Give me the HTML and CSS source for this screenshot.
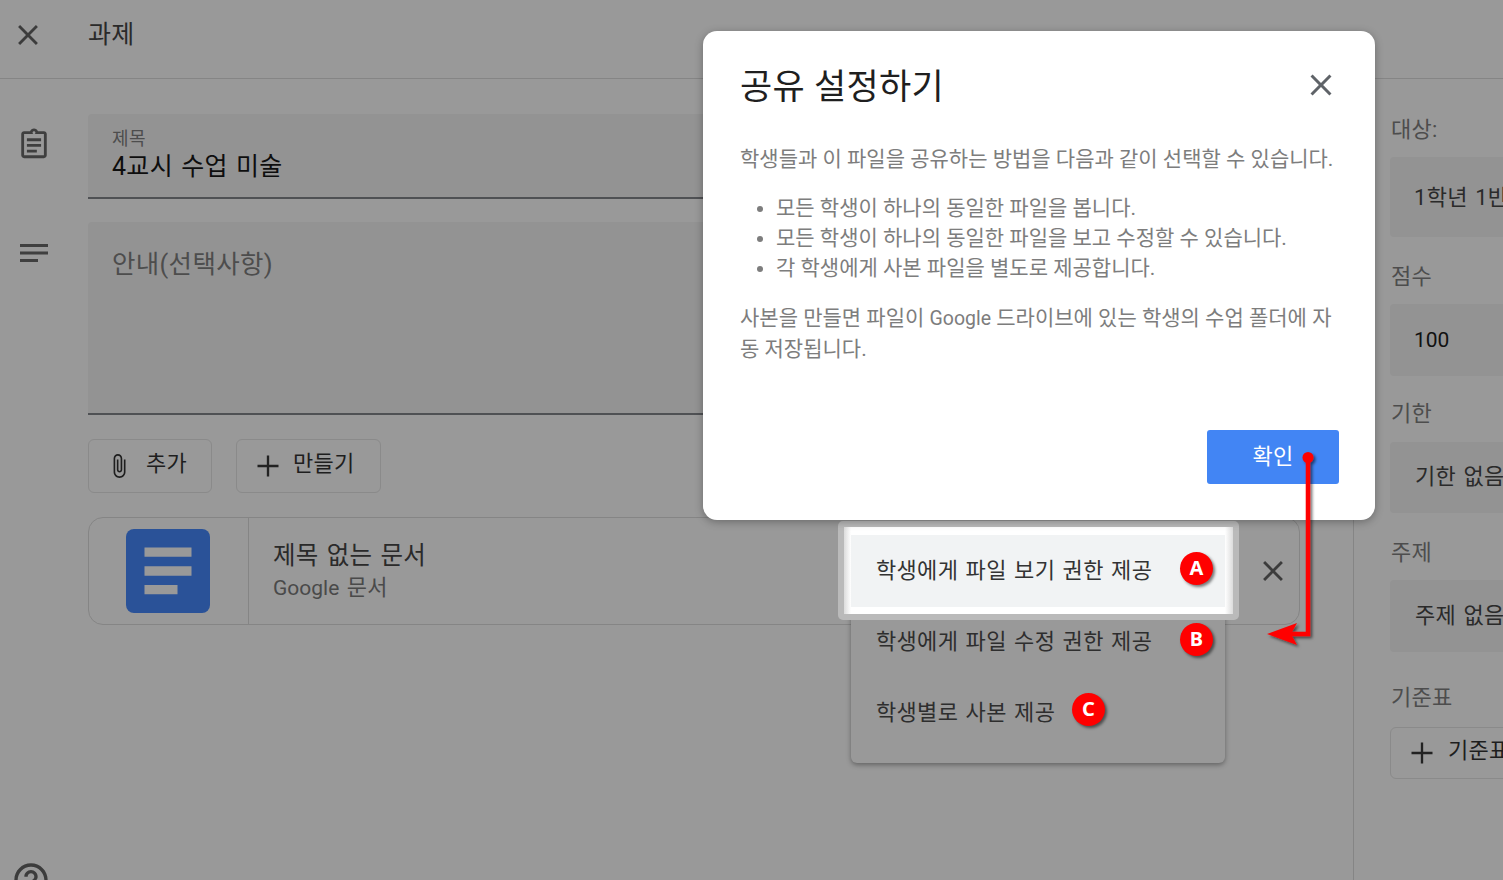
FILE: index.html
```html
<!DOCTYPE html>
<html lang="ko">
<head>
<meta charset="utf-8">
<title>과제</title>
<link rel="stylesheet" href="styles.css">
</head>
<body>
<div class="page">
  <header class="topbar">
    <svg class="close-top" viewBox="0 0 24 24"><path d="M19 6.410 17.590 5 12 10.590 6.410 5 5 6.410 10.590 12 5 17.590 6.410 19 12 13.410 17.590 19 19 17.590 13.410 12z"/></svg>
    <h1 class="page-title">과제</h1>
  </header>
  <div class="body">
    <main class="main">
      <div class="row">
        <svg class="row-icon" viewBox="0 0 24 24"><path d="M19 3h-4.180C14.400 1.840 13.300 1 12 1s-2.400.84-2.820 2H5c-1.100 0-2 .9-2 2v15c0 1.100.9 2 2 2h14c1.100 0 2-.9 2-2V5c0-1.100-.9-2-2-2zm-7 0c.55 0 1 .45 1 1s-.45 1-1 1-1-.45-1-1 .45-1 1-1zm7 17H5V5h14v15zM7 8h10v2H7zm0 4h10v2H7zm0 4h7v2H7z"/></svg>
        <div class="field title-field">
          <div class="field-label">제목</div>
          <div class="field-value">4교시 수업 미술</div>
        </div>
      </div>
      <div class="row">
        <svg class="row-icon" viewBox="0 0 34 34"><path d="M3 9h28v3H3zM3 16.500h28v3H3zM3 24h18v3H3z"/></svg>
        <div class="field desc-field">안내(선택사항)</div>
      </div>
      <div class="actions">
        <button class="btn btn-add">
          <svg class="clip" viewBox="0 0 24 24"><path d="M16.500 6v11.500c0 2.210-1.790 4-4 4s-4-1.790-4-4V5c0-1.380 1.120-2.500 2.500-2.500s2.500 1.120 2.500 2.500v10.500c0 .55-.45 1-1 1s-1-.45-1-1V6H10v9.500c0 1.380 1.120 2.500 2.500 2.500s2.500-1.120 2.500-2.500V5c0-2.210-1.790-4-4-4S7 2.790 7 5v12.500c0 3.040 2.460 5.500 5.500 5.500s5.500-2.460 5.500-5.500V6h-1.500z"/></svg>
          <span>추가</span>
        </button>
        <button class="btn btn-make">
          <svg class="plus" viewBox="0 0 24 24"><path d="M21 13h-8v8h-2v-8H3v-2h8V3h2v8h8z"/></svg>
          <span>만들기</span>
        </button>
      </div>
      <div class="attachment">
        <div class="thumb">
          <svg class="doc-icon" viewBox="0 0 84 84"><rect width="84" height="84" rx="8" fill="#2a5298"/><path fill="#999" d="M18.500 18.500h47v9.200h-47zM18.500 37.200h47v9.500h-47zM18.500 56h33v9.200h-33z"/></svg>
        </div>
        <div class="attach-text">
          <div class="attach-name">제목 없는 문서</div>
          <div class="attach-type"><span class="latin">Google</span> 문서</div>
        </div>
        <svg class="attach-x" viewBox="0 0 24 24"><path d="M19 6.410 17.590 5 12 10.590 6.410 5 5 6.410 10.590 12 5 17.590 6.410 19 12 13.410 17.590 19 19 17.590 13.410 12z"/></svg>
      </div>
      <svg class="help" viewBox="0 0 24 24"><path d="M11 18h2v-2h-2v2zm1-16C6.480 2 2 6.480 2 12s4.480 10 10 10 10-4.480 10-10S17.520 2 12 2zm0 18c-4.410 0-8-3.590-8-8s3.590-8 8-8 8 3.590 8 8-3.590 8-8 8zm0-14c-2.210 0-4 1.790-4 4h2c0-1.100.9-2 2-2s2 .9 2 2c0 2-3 1.750-3 5h2c0-2.250 3-2.500 3-5 0-2.210-1.790-4-4-4z"/></svg>
    </main>
    <aside class="side">
      <div class="side-label first">대상:</div>
      <div class="side-box box-class">1학년 1반</div>
      <div class="side-label lbl-score">점수</div>
      <div class="side-box box-score">100</div>
      <div class="side-label lbl-due">기한</div>
      <div class="side-box box-due">기한 없음</div>
      <div class="side-label lbl-topic">주제</div>
      <div class="side-box box-topic">주제 없음</div>
      <div class="side-label lbl-rubric">기준표</div>
      <div class="side-btn">
        <svg class="plus" viewBox="0 0 24 24"><path d="M21 13h-8v8h-2v-8H3v-2h8V3h2v8h8z"/></svg>
        <span>기준표</span>
      </div>
    </aside>
  </div>
</div>

<div class="menu">
  <div class="menu-item">학생에게 파일 수정 권한 제공</div>
  <div class="menu-item">학생별로 사본 제공</div>
</div>

<div class="focus">
  <div class="focus-inner">
    <div class="focus-item">학생에게 파일 보기 권한 제공</div>
  </div>
</div>

<section class="dialog">
  <div class="dialog-head">
    <h2 class="dialog-title">공유 설정하기</h2>
    <svg class="dialog-x" viewBox="0 0 24 24"><path d="M19 6.410 17.590 5 12 10.590 6.410 5 5 6.410 10.590 12 5 17.590 6.410 19 12 13.410 17.590 19 19 17.590 13.410 12z"/></svg>
  </div>
  <div class="dialog-body">
    <p class="dialog-p">학생들과 이 파일을 공유하는 방법을 다음과 같이 선택할 수 있습니다.</p>
    <ul class="dialog-list">
      <li>모든 학생이 하나의 동일한 파일을 봅니다.</li>
      <li>모든 학생이 하나의 동일한 파일을 보고 수정할 수 있습니다.</li>
      <li>각 학생에게 사본 파일을 별도로 제공합니다.</li>
    </ul>
    <p class="dialog-p">사본을 만들면 파일이 <span class="latin-small">Google</span> 드라이브에 있는 학생의 수업 폴더에 자동 저장됩니다.</p>
  </div>
  <div class="dialog-foot"><button class="ok">확인</button></div>
</section>

<div class="badge badge-a">A</div>
<div class="badge badge-b">B</div>
<div class="badge badge-c">C</div>

<svg class="arrow" viewBox="0 0 60 200">
  <defs><filter id="sh" x="-30%" y="-10%" width="170%" height="130%"><feDropShadow dx="2" dy="2" stdDeviation="1.500" flood-color="#000" flood-opacity=".55"/></filter></defs>
  <g filter="url(#sh)">
    <circle cx="48" cy="7.500" r="5.500" fill="#f00"/>
    <path d="M48 8V184H28" fill="none" stroke="#f00" stroke-width="4.500"/>
    <path d="M7 184 37 173 31 184 37 195z" fill="#f00"/>
  </g>
</svg>
</body>
</html>
```
FILE: styles.css
```css
* { box-sizing: border-box; }
html, body { margin: 0; height: 880px; overflow: hidden; }
body {
  position: relative;
  background: #999;
  color: #333;
  font-family: Roboto, "Noto Sans CJK KR", sans-serif;
  letter-spacing: .02em;
  word-spacing: .1em;
}
svg { display: block; flex: none; fill: currentColor; }
button { font: inherit; color: inherit; background: none; padding: 0; letter-spacing: inherit; word-spacing: inherit; }

.page { height: 880px; display: flex; flex-direction: column; }
.topbar {
  height: 79px;
  flex: none;
  display: flex;
  align-items: center;
  border-bottom: 1px solid #858585;
  padding-bottom: 8px;
}
.close-top { width: 34px; height: 34px; margin-left: 11px; color: #3c3c3c; }
.page-title { margin: 0 0 0 43px; font-size: 25px; font-weight: 400; line-height: 32px; color: #2a2a2a; }

.body { flex: 1; display: flex; min-height: 0; }
.main {
  width: 1354px;
  flex: none;
  border-right: 1px solid #858585;
  padding: 35px 53px 0 0;
  position: relative;
}
.row { display: flex; margin-bottom: 23px; }
.row-icon { width: 34px; height: 34px; margin: 13px 37px 0 17px; color: #3f3f3f; }
.field { flex: 1; background: #939393; border-radius: 4px 4px 0 0; }
.title-field { height: 85px; padding: 15px 24px 0; border-bottom: 2px solid #4f5154; }
.field-label { font-size: 18px; line-height: 20px; color: #4d4d4d; }
.field-value { font-size: 25px; line-height: 36px; color: #0e0e0e; }
.desc-field {
  height: 193px;
  padding: 24px 24px 0;
  border-bottom: 2px solid #4f5154;
  font-size: 25.500px;
  line-height: 36px;
  color: #4d4d4d;
}
.actions { display: flex; gap: 24px; margin: 24px 0 24px 88px; }
.btn {
  height: 54px;
  display: flex;
  align-items: center;
  border: 1px solid #8a8a8a;
  border-radius: 6px;
  font-size: 22px;
  color: #1e1e1e;
}
.btn span { position: relative; top: -5px; }
.btn-add { width: 124px; padding-left: 18px; }
.btn-add span { margin-left: 14px; }
.btn-make { width: 145px; padding-left: 17px; }
.btn-make span { margin-left: 11px; }
.clip { width: 26px; height: 26px; margin-left: -1px; }
.plus { width: 28px; height: 28px; color: #222; }

.attachment {
  margin-left: 88px;
  height: 108px;
  display: flex;
  align-items: center;
  border: 1px solid #858585;
  border-radius: 15px;
  position: relative;
}
.thumb {
  width: 160px;
  height: 106px;
  flex: none;
  display: flex;
  align-items: center;
  justify-content: center;
  border-right: 1px solid #858585;
}
.doc-icon { width: 84px; height: 84px; margin-left: -1px; }
.attach-text { margin-left: 24px; margin-top: -2px; }
.attach-name { font-size: 24.500px; line-height: 36px; color: #2a2a2a; }
.attach-type { font-size: 22px; line-height: 30px; color: #4a4a4a; margin-top: -1px; }
.latin { font-size: 21px; letter-spacing: 0; }
.attach-x {
  position: absolute;
  right: 9px;
  top: 36px;
  width: 34px;
  height: 34px;
  color: #3c3c3c;
}
.help { position: absolute; left: 11px; top: 781px; width: 40px; height: 40px; color: #3c3c3c; }

.side { flex: 1; padding-left: 37px; overflow: hidden; min-width: 0; }
.side-label { font-size: 22px; line-height: 28px; color: #4d4d4d; white-space: nowrap; }
.side-label.first { margin-top: 37px; }
.side-box {
  background: #939393;
  border-radius: 4px;
  width: 260px;
  margin-left: -1px;
  padding-left: 25px;
  font-size: 22px;
  color: #2a2a2a;
  white-space: nowrap;
  display: flex;
  align-items: center;
}
.box-class { margin-top: 13px; height: 80px; padding-left: 24px; padding-bottom: 4px; }
.lbl-score { margin-top: 26px; }
.box-score { margin-top: 13px; height: 72px; padding-left: 24px; color: #111; font-size: 21px; letter-spacing: 0; }
.lbl-due { margin-top: 24px; }
.box-due { margin-top: 14px; height: 71px; padding-bottom: 7px; }
.lbl-topic { margin-top: 26px; }
.box-topic { margin-top: 13px; height: 72px; padding-bottom: 6px; }
.lbl-rubric { margin-top: 32px; }
.side-btn {
  margin-top: 15px;
  margin-left: -1px;
  width: 260px;
  height: 52px;
  border: 1px solid #8a8a8a;
  border-radius: 6px;
  display: flex;
  align-items: center;
  padding-left: 17px;
  font-size: 22px;
  color: #1e1e1e;
  white-space: nowrap;
}
.side-btn span { margin-left: 12px; position: relative; top: -5px; }

.menu {
  position: absolute;
  left: 851px;
  top: 604px;
  width: 374px;
  height: 159px;
  background: #999;
  border-radius: 0 0 6px 6px;
  box-shadow: 0 2px 5px rgba(0,0,0,.35);
  padding-top: 3px;
}
.menu-item {
  height: 71px;
  padding-left: 25px;
  font-size: 22px;
  line-height: 70px;
  color: #2e2e2e;
}

.focus {
  position: absolute;
  left: 838px;
  top: 521px;
  width: 401px;
  height: 99px;
  padding: 6px;
  background: #bababa;
  border-radius: 5px;
}
.focus-inner {
  height: 87px;
  background: linear-gradient(to right, #dcdcdc, #fff 7px, #fff calc(100% - 8px), #dcdcdc);
  padding: 8px 8px 7px 7px;
}
.focus-item {
  height: 72px;
  background: #f1f3f4;
  padding-left: 25px;
  font-size: 22px;
  line-height: 72px;
  color: #333;
}

.dialog {
  position: absolute;
  left: 703px;
  top: 31px;
  width: 672px;
  height: 489px;
  background: #fff;
  border-radius: 14px;
  box-shadow: 0 2px 8px rgba(0,0,0,.3);
  display: flex;
  flex-direction: column;
  padding: 0 36px;
}
.dialog-head { display: flex; justify-content: space-between; align-items: center; height: 108px; flex: none; }
.dialog-title { margin: 6px 0 0 1px; font-size: 35px; font-weight: 400; line-height: 44px; color: #1f1f1f; letter-spacing: .3px; word-spacing: 0; }
.dialog-x { width: 36px; height: 36px; color: #5f6368; margin-right: 0; }
.dialog-body {
  font-size: 21px;
  line-height: 30px;
  color: #7d7d7d;
  flex: 1;
  letter-spacing: 0;
  word-spacing: 0;
  word-break: break-all;
  padding-left: 1px;
}
.dialog-p { margin: 5px 0 19px; }
.dialog-list { margin: 0 0 20px; padding-left: 36px; }
.latin-small { font-size: 19.500px; }
.dialog-foot { display: flex; justify-content: flex-end; flex: none; padding-bottom: 36px; }
.ok {
  width: 132px;
  height: 54px;
  border: 0;
  border-radius: 3px;
  background: #4285f4;
  color: #fff;
  font-size: 22px;
  padding-bottom: 6px;
}

.badge {
  position: absolute;
  width: 33px;
  height: 33px;
  border-radius: 50%;
  background: #f00;
  color: #fff;
  font-family: "Noto Sans", "Open Sans", sans-serif;
  font-weight: 700;
  font-size: 20px;
  line-height: 32px;
  text-align: center;
  letter-spacing: 0;
  box-shadow: 2px 2px 3px rgba(0,0,0,.5);
}
.badge-a { left: 1180px; top: 552px; }
.badge-b { left: 1180px; top: 623px; }
.badge-c { left: 1072px; top: 693px; }
.arrow { position: absolute; left: 1260px; top: 450px; width: 60px; height: 200px; }
```
